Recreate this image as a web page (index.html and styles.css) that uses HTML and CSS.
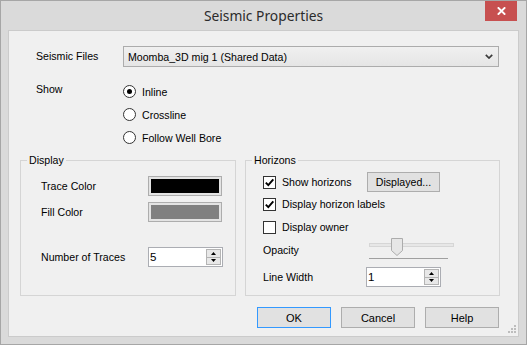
FILE: index.html
```html
<!DOCTYPE html>
<html lang="en">
<head>
<meta charset="utf-8">
<title>Seismic Properties</title>
<link rel="stylesheet" href="styles.css">
</head>
<body>
<div class="window">
  <div class="titlebar">
    <div class="tb-left"></div>
    <div class="title">Seismic Properties</div>
    <div class="tb-right">
      <button class="close" aria-label="Close">
        <svg width="9" height="8" viewBox="0 0 9 8"><path d="M0.8 0.3 L8.2 7.7 M8.2 0.3 L0.8 7.7" stroke="#fff" stroke-width="1.9" fill="none"/></svg>
      </button>
    </div>
  </div>
  <div class="client">
    <div class="files">
      <span class="lbl">Seismic Files</span>
      <div class="combo">
        <span class="combo-text">Moomba_3D mig 1 (Shared Data)</span>
        <svg class="chev" width="8" height="5" viewBox="0 0 8 5"><path d="M0.8 0.8 L4 4 L7.2 0.8" stroke="#3a3a3a" stroke-width="1.7" fill="none"/></svg>
      </div>
    </div>
    <div class="show">
      <span class="lbl show-lbl">Show</span>
      <div class="radios">
        <div class="opt"><span class="radio on"></span>Inline</div>
        <div class="opt"><span class="radio"></span>Crossline</div>
        <div class="opt"><span class="radio"></span>Follow Well Bore</div>
      </div>
    </div>
    <div class="groups">
      <fieldset class="group display">
        <legend>Display</legend>
        <div class="gbody dbody">
          <div class="drow r1"><span class="dlbl">Trace Color</span><span class="swatch"><span class="fill fill-black"></span></span></div>
          <div class="drow r2"><span class="dlbl">Fill Color</span><span class="swatch"><span class="fill fill-grey"></span></span></div>
          <div class="drow r3"><span class="dlbl">Number of Traces</span>
            <div class="spin"><span class="spin-val">5</span>
              <div class="spin-btns">
                <span class="sbtn"><svg width="5" height="3" viewBox="0 0 5 3"><path d="M0 3 L2.5 0 L5 3 Z" fill="#000"/></svg></span>
                <span class="sbtn"><svg width="5" height="3" viewBox="0 0 5 3"><path d="M0 0 L2.5 3 L5 0 Z" fill="#000"/></svg></span>
              </div>
            </div>
          </div>
        </div>
      </fieldset>
      <fieldset class="group horizons">
        <legend>Horizons</legend>
        <div class="gbody hbody">
          <div class="hrow h1">
            <div class="chk-wrap"><span class="chk"><svg width="11" height="11" viewBox="0 0 11 11"><path d="M1.8 5.6 L4.3 8.2 L9.3 2.4" stroke="#000" stroke-width="1.9" fill="none"/></svg></span>Show horizons</div>
            <button class="btn btn-disp">Displayed...</button>
          </div>
          <div class="hrow h2">
            <div class="chk-wrap"><span class="chk"><svg width="11" height="11" viewBox="0 0 11 11"><path d="M1.8 5.6 L4.3 8.2 L9.3 2.4" stroke="#000" stroke-width="1.9" fill="none"/></svg></span>Display horizon labels</div>
          </div>
          <div class="hrow h3">
            <div class="chk-wrap"><span class="chk"></span>Display owner</div>
          </div>
          <div class="hrow h4">
            <span class="hlbl op-lbl">Opacity</span>
            <svg class="slider" width="86" height="21" viewBox="0 0 86 21">
              <rect x="0.5" y="5.5" width="84" height="3" fill="#e7e7e7" stroke="#d6d6d6"/>
              <path d="M22.5 0.5 H33.5 V12.5 L28 17.5 L22.5 12.5 Z" fill="#e6e6e6" stroke="#acacac"/>
              <rect x="0" y="20" width="79" height="1" fill="#a0a0a0"/>
            </svg>
          </div>
          <div class="hrow h5">
            <span class="hlbl lw-lbl">Line Width</span>
            <div class="spin"><span class="spin-val">1</span>
              <div class="spin-btns">
                <span class="sbtn"><svg width="5" height="3" viewBox="0 0 5 3"><path d="M0 3 L2.5 0 L5 3 Z" fill="#000"/></svg></span>
                <span class="sbtn"><svg width="5" height="3" viewBox="0 0 5 3"><path d="M0 0 L2.5 3 L5 0 Z" fill="#000"/></svg></span>
              </div>
            </div>
          </div>
        </div>
      </fieldset>
    </div>
    <div class="buttons">
      <button class="btn dlg-btn ok">OK</button>
      <button class="btn dlg-btn">Cancel</button>
      <button class="btn dlg-btn">Help</button>
    </div>
    <svg class="grip" width="9" height="9" viewBox="0 0 9 9">
      <rect x="6" y="0" width="2" height="2" fill="#bdbdbd"/>
      <rect x="3" y="3" width="2" height="2" fill="#bdbdbd"/>
      <rect x="6" y="3" width="2" height="2" fill="#bdbdbd"/>
      <rect x="0" y="6" width="2" height="2" fill="#bdbdbd"/>
      <rect x="3" y="6" width="2" height="2" fill="#bdbdbd"/>
      <rect x="6" y="6" width="2" height="2" fill="#bdbdbd"/>
    </svg>
  </div>
</div>
</body>
</html>
```
FILE: styles.css
```css
* { box-sizing: border-box; }
html, body { margin: 0; padding: 0; }
body {
  width: 527px;
  height: 345px;
  overflow: hidden;
  background: #ffffff;
  font-family: "Liberation Sans", Arial, sans-serif;
  font-size: 10.6px;
  color: #000;
}
.window {
  width: 527px;
  height: 345px;
  border: 1px solid #a6a6a6;
  background: #dadada;
  display: flex;
  flex-direction: column;
}
.titlebar {
  height: 29px;
  flex: none;
  display: grid;
  grid-template-columns: 1fr auto 1fr;
}
.title {
  font-family: "Noto Sans", "Open Sans", sans-serif;
  font-size: 13.8px;
  line-height: 29px;
  color: #2b2b2b;
}
.tb-right {
  display: flex;
  justify-content: flex-end;
  align-items: flex-start;
  padding-right: 9px;
}
.close {
  width: 32px;
  height: 20px;
  border: 0;
  padding: 0;
  margin: 0;
  background: #c75050;
  display: flex;
  align-items: center;
  justify-content: center;
}
.client {
  position: relative;
  margin: 0 7px;
  height: 307px;
  border: 1px solid #cbcbcb;
  background: #f0f0f0;
  display: flex;
  flex-direction: column;
}
.files {
  margin: 15px 0 0 27px;
  height: 21px;
  display: flex;
  align-items: center;
}
.lbl { width: 87px; flex: none; line-height: 13px; }
.combo {
  width: 376px;
  height: 21px;
  border: 1px solid #acacac;
  background: linear-gradient(#f0f0f0, #e5e5e5);
  display: flex;
  align-items: center;
  padding: 0 5px 0 4px;
}
.combo-text { flex: 1; }
.chev { flex: none; }
.show {
  margin: 13px 0 0 27px;
  display: flex;
  align-items: flex-start;
}
.show-lbl { margin-top: 3px; }
.radios { display: flex; flex-direction: column; }
.opt { height: 23px; display: flex; align-items: center; }
.radio {
  width: 13px;
  height: 13px;
  border: 1px solid #333;
  border-radius: 50%;
  background: #fff;
  margin-right: 6px;
  display: flex;
  align-items: center;
  justify-content: center;
}
.radio.on::after {
  content: "";
  width: 5px;
  height: 5px;
  border-radius: 50%;
  background: #000;
}
.groups {
  margin: 5px 0 0 11px;
  display: flex;
  gap: 9px;
}
.group {
  margin: 0;
  padding: 0;
  min-width: 0;
  height: 142px;
  border: 1px solid #d5d5d5;
}
.group legend {
  margin-left: 6px;
  padding: 0 2px;
  line-height: 12px;
}
.display { width: 216px; }
.horizons { width: 255px; }
.dbody { padding-left: 20px; }
.drow { height: 20px; display: flex; align-items: center; }
.drow.r1 { margin-top: 10px; }
.drow.r2 { margin-top: 6px; }
.drow.r3 { margin-top: 25px; }
.dlbl { width: 107px; flex: none; }
.swatch {
  width: 74px;
  height: 20px;
  border: 1px solid #adadad;
  background: #e3e3e3;
  padding: 2px;
  display: flex;
}
.fill { flex: 1; }
.fill-black { background: #000; }
.fill-grey { background: #808080; }
.spin {
  width: 75px;
  height: 20px;
  border: 1px solid #abadb3;
  background: #fff;
  display: flex;
  align-items: stretch;
}
.spin-val { flex: 1; padding-left: 1px; line-height: 18px; font-size: 11.5px; }
.spin-btns {
  width: 15px;
  margin: 1px;
  display: flex;
  flex-direction: column;
}
.sbtn {
  flex: 1;
  border: 1px solid #b4b4b4;
  background: #e8e8e8;
  display: flex;
  align-items: center;
  justify-content: center;
}
.sbtn + .sbtn { border-top: 0; }
.hbody { padding-left: 17px; }
.hrow { height: 20px; display: flex; align-items: center; }
.hrow.h1 { margin-top: 6px; }
.hrow.h2 { margin-top: 2px; }
.hrow.h3 { margin-top: 3px; }
.hrow.h4 { margin-top: 1px; height: 21px; }
.hrow.h5 { margin-top: 8px; }
.chk-wrap { width: 104px; flex: none; display: flex; align-items: center; white-space: nowrap; }
.chk {
  width: 13px;
  height: 13px;
  border: 1px solid #333;
  background: #fff;
  margin-right: 6px;
  flex: none;
  display: flex;
  align-items: center;
  justify-content: center;
}
.btn {
  font-family: inherit;
  font-size: inherit;
  color: #000;
  background: #e1e1e1;
  border: 1px solid #adadad;
  padding: 0;
  margin: 0;
}
.btn-disp { width: 73px; height: 20px; }
.hlbl { flex: none; }
.op-lbl { width: 106px; padding-top: 3px; }
.lw-lbl { width: 103px; }
.slider { flex: none; display: block; }
.buttons {
  margin-top: 11px;
  height: 21px;
  padding-right: 19px;
  display: flex;
  justify-content: flex-end;
  gap: 10px;
}
.dlg-btn { width: 74px; height: 21px; font-size: 11px; }
.dlg-btn.ok { border-color: #3399ff; }
.grip { position: absolute; right: 1px; bottom: 2px; }
```
